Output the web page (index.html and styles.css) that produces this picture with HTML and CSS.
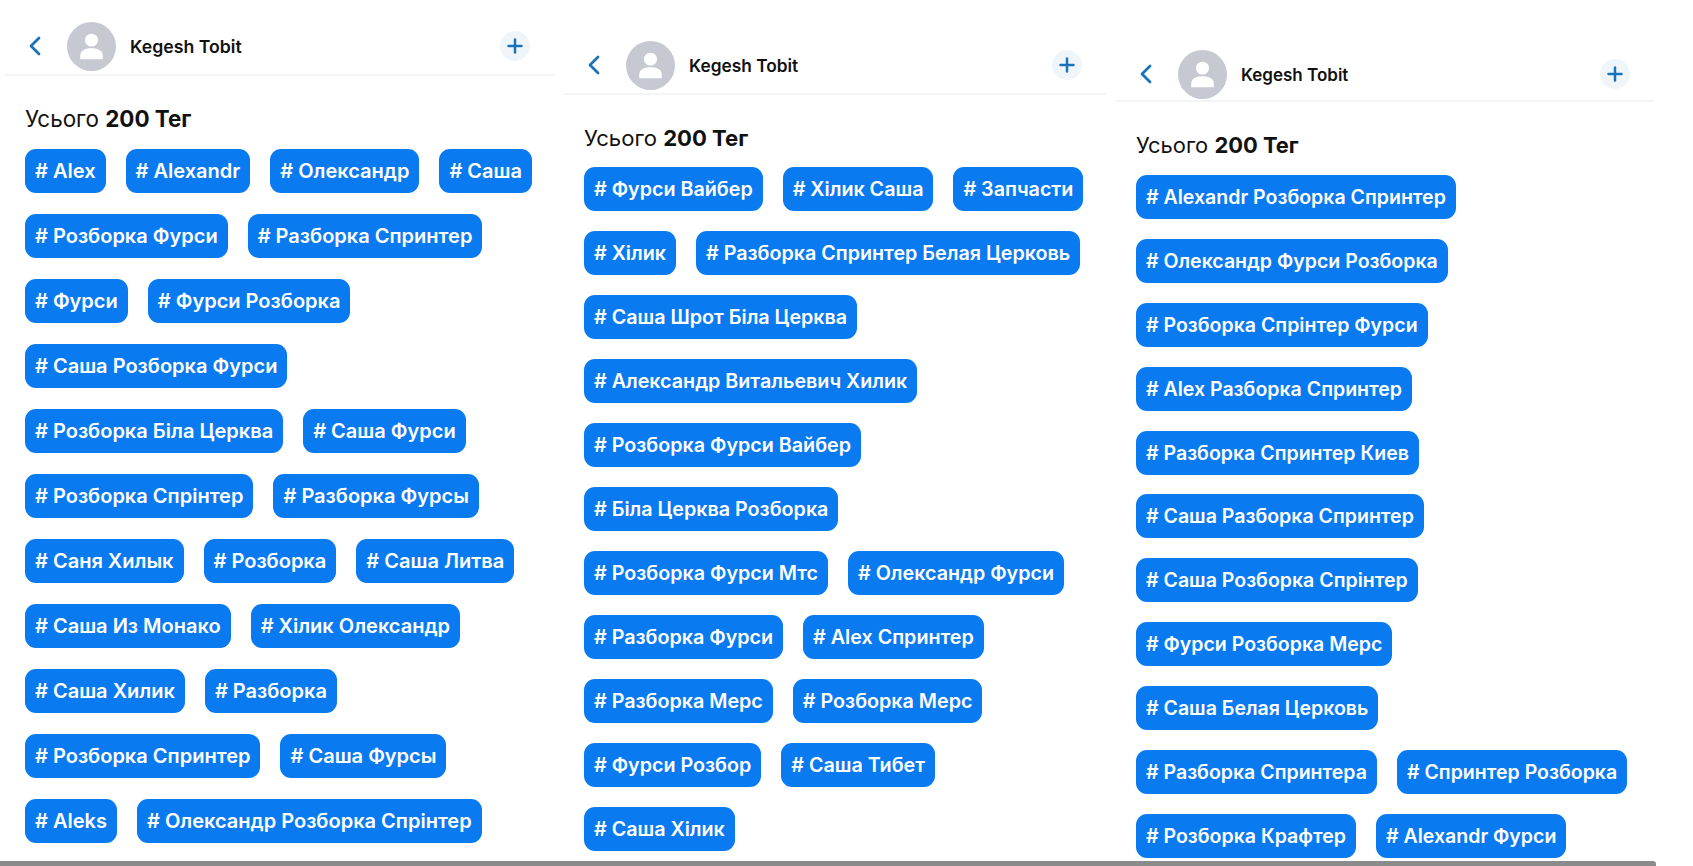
FILE: index.html
```html
<!DOCTYPE html>
<html lang="uk">

<head>
    <meta charset="UTF-8">
    <meta name="viewport" content="width=device-width, initial-scale=1.0">
    <title>Kegesh Tobit</title>
    <link rel="stylesheet" href="styles.css">
</head>

<body>
    <svg class="icon-defs" width="0" height="0">
        <defs>
            <symbol id="icon-back" viewBox="0 0 14 20">
                <path d="M11 2 L3 10 L11 18" fill="none" stroke="currentColor" stroke-width="2.8" stroke-linecap="round" stroke-linejoin="round" />
            </symbol>
            <symbol id="icon-user" viewBox="0 0 50 50">
                <circle cx="25" cy="25" r="25" fill="#c6c9d2" />
                <circle cx="25" cy="18.5" r="6.6" fill="#fff" />
                <path d="M13.5 38 V34.5 C13.5 29.5 18 26.8 25 26.8 C32 26.8 36.5 29.5 36.5 34.5 V38 Z" fill="#fff" />
            </symbol>
            <symbol id="icon-plus" viewBox="0 0 16 16">
                <path d="M8 1.5 V14.5 M1.5 8 H14.5" fill="none" stroke="currentColor" stroke-width="2.5" stroke-linecap="round" />
            </symbol>
        </defs>
    </svg>

    <div class="screens">
        <section class="panel panel-one">
            <header class="panel-header">
                <svg class="back-icon"><use href="#icon-back"></use></svg>
                <svg class="avatar"><use href="#icon-user"></use></svg>
                <span class="user-name">Kegesh Tobit</span>
                <span class="add-btn"><svg class="plus-icon"><use href="#icon-plus"></use></svg></span>
            </header>
            <h2 class="total">Усього <b>200 Тег</b></h2>
            <div class="tags">
                <span class="tag"># Alex</span>
                <span class="tag"># Alexandr</span>
                <span class="tag"># Олександр</span>
                <span class="tag"># Саша</span>
                <span class="tag"># Розборка Фурси</span>
                <span class="tag"># Разборка Спринтер</span>
                <span class="tag"># Фурси</span>
                <span class="tag"># Фурси Розборка</span>
                <span class="tag"># Саша Розборка Фурси</span>
                <span class="tag"># Розборка Біла Церква</span>
                <span class="tag"># Саша Фурси</span>
                <span class="tag"># Розборка Спрінтер</span>
                <span class="tag"># Разборка Фурсы</span>
                <span class="tag"># Саня Хилык</span>
                <span class="tag"># Розборка</span>
                <span class="tag"># Саша Литва</span>
                <span class="tag"># Саша Из Монако</span>
                <span class="tag"># Хілик Олександр</span>
                <span class="tag"># Саша Хилик</span>
                <span class="tag"># Разборка</span>
                <span class="tag"># Розборка Спринтер</span>
                <span class="tag"># Саша Фурсы</span>
                <span class="tag"># Aleks</span>
                <span class="tag"># Олександр Розборка Спрінтер</span>
            </div>
        </section>

        <section class="panel panel-two">
            <header class="panel-header">
                <svg class="back-icon"><use href="#icon-back"></use></svg>
                <svg class="avatar"><use href="#icon-user"></use></svg>
                <span class="user-name">Kegesh Tobit</span>
                <span class="add-btn"><svg class="plus-icon"><use href="#icon-plus"></use></svg></span>
            </header>
            <h2 class="total">Усього <b>200 Тег</b></h2>
            <div class="tags">
                <span class="tag"># Фурси Вайбер</span>
                <span class="tag"># Хілик Саша</span>
                <span class="tag"># Запчасти</span>
                <span class="tag"># Хілик</span>
                <span class="tag"># Разборка Спринтер Белая Церковь</span>
                <span class="tag"># Саша Шрот Біла Церква</span>
                <span class="tag"># Александр Витальевич Хилик</span>
                <span class="tag"># Розборка Фурси Вайбер</span>
                <span class="tag"># Біла Церква Розборка</span>
                <span class="tag"># Розборка Фурси Мтс</span>
                <span class="tag"># Олександр Фурси</span>
                <span class="tag"># Разборка Фурси</span>
                <span class="tag"># Alex Спринтер</span>
                <span class="tag"># Разборка Мерс</span>
                <span class="tag"># Розборка Мерс</span>
                <span class="tag"># Фурси Розбор</span>
                <span class="tag"># Саша Тибет</span>
                <span class="tag"># Саша Хілик</span>
            </div>
        </section>

        <section class="panel panel-three">
            <header class="panel-header">
                <svg class="back-icon"><use href="#icon-back"></use></svg>
                <svg class="avatar"><use href="#icon-user"></use></svg>
                <span class="user-name">Kegesh Tobit</span>
                <span class="add-btn"><svg class="plus-icon"><use href="#icon-plus"></use></svg></span>
            </header>
            <h2 class="total">Усього <b>200 Тег</b></h2>
            <div class="tags">
                <span class="tag"># Alexandr Розборка Спринтер</span>
                <span class="tag"># Олександр Фурси Розборка</span>
                <span class="tag"># Розборка Спрінтер Фурси</span>
                <span class="tag"># Alex Разборка Спринтер</span>
                <span class="tag"># Разборка Спринтер Киев</span>
                <span class="tag"># Саша Разборка Спринтер</span>
                <span class="tag"># Саша Розборка Спрінтер</span>
                <span class="tag"># Фурси Розборка Мерс</span>
                <span class="tag"># Саша Белая Церковь</span>
                <span class="tag"># Разборка Спринтера</span>
                <span class="tag"># Спринтер Розборка</span>
                <span class="tag"># Розборка Крафтер</span>
                <span class="tag"># Alexandr Фурси</span>
            </div>
        </section>
    </div>

    <div class="bottom-bar"></div>
</body>

</html>
```

FILE: styles.css
```css
/* Page */
html,
body {
    margin: 0;
    padding: 0;
    height: 866px;
    overflow: hidden;
    background: #fff;
}

body {
    font-family: 'Inter', 'Noto Sans', sans-serif;
    color: #111;
    display: flex;
    flex-direction: column;
}

.icon-defs {
    position: absolute;
}

.screens {
    flex: 1;
    min-height: 0;
    display: flex;
    gap: 10px;
    padding-left: 5px;
}

.bottom-bar {
    width: 1656px;
    height: 5px;
    background: #8b8b8b;
    border-top-right-radius: 3px;
}

/* Panels: the three phone shots are scaled slightly differently */
.panel {
    box-sizing: border-box;
    overflow: hidden;
}

.panel-one {
    width: 549px;
    padding-top: 22px;
    --header-height: 52px;
    --name-font: 17.7px;
    --title-font: 22.4px;
    --tag-font: 20.02px;
    --tag-top: 15px;
    --row-gap: 21px;
    --tags-right: 12px;
}

.panel-two {
    width: 542px;
    padding-top: 41px;
    --header-height: 52px;
    --name-font: 17.3px;
    --title-font: 22.1px;
    --tag-font: 19.72px;
    --tag-top: 14px;
    --row-gap: 20px;
    --tags-right: 14px;
}

.panel-three {
    width: 538px;
    padding-top: 50px;
    --header-height: 50px;
    --name-font: 17px;
    --title-font: 21.9px;
    --tag-font: 19.55px;
    --tag-top: 15px;
    --row-gap: 19.9px;
    --tags-right: 20px;
}

/* Header */
.panel-header {
    height: var(--header-height);
    display: flex;
    align-items: flex-start;
    border-bottom: 2px solid #f3f4f5;
}

.back-icon {
    width: 14px;
    height: 20px;
    margin: 14px 0 0 23px;
    color: #1a73b8;
}

.avatar {
    width: 49px;
    height: 49px;
    margin-left: 25px;
}

.user-name {
    flex: 1;
    margin: 13px 0 0 14px;
    font-size: var(--name-font);
    line-height: 24px;
    font-weight: 560;
}

.add-btn {
    width: 30px;
    height: 30px;
    margin: 9px 24px 0 0;
    border-radius: 50%;
    background: #f0f5fa;
    display: flex;
    align-items: center;
    justify-content: center;
}

.plus-icon {
    width: 16px;
    height: 16px;
    color: #1a73b8;
}

/* Title */
.total {
    margin: 28px 0 0 20px;
    font-size: var(--title-font);
    line-height: 30px;
    font-weight: 400;
}

.total b {
    font-weight: 700;
}

/* Tags */
.tags {
    display: flex;
    flex-wrap: wrap;
    gap: var(--row-gap) 20px;
    margin-top: var(--tag-top);
    padding: 0 var(--tags-right) 0 20px;
}

.tag {
    height: 44px;
    line-height: 44px;
    padding: 0 10px;
    border-radius: 11px;
    background: #0a7af0;
    color: #fff;
    font-size: var(--tag-font);
    font-weight: 560;
    white-space: nowrap;
}
```
